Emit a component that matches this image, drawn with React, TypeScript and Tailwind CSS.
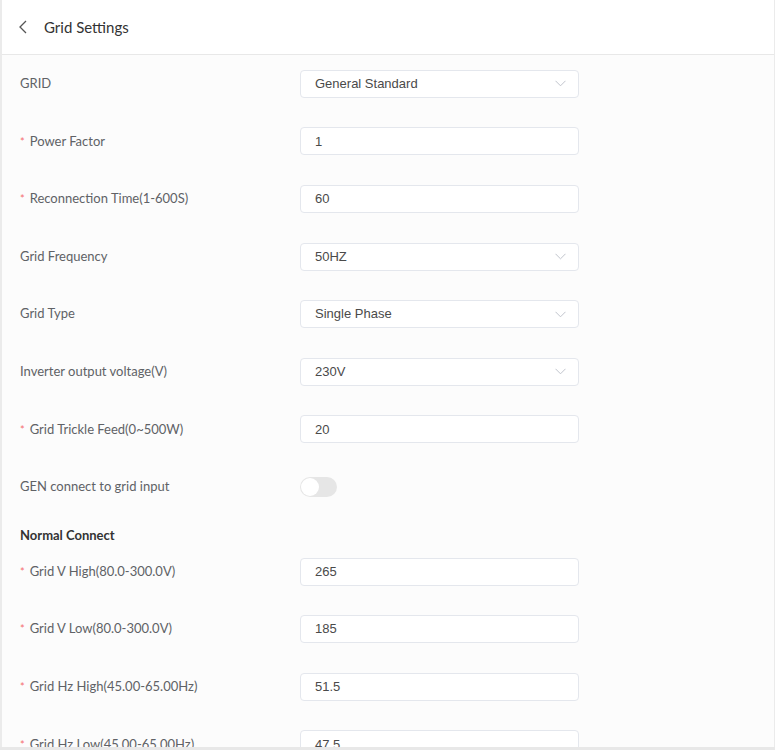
import React from 'react'

type Field = {
  label: string
  required?: boolean
  kind: 'select' | 'input' | 'switch'
  value?: string
}

const mainFields: Field[] = [
  { label: 'GRID', kind: 'select', value: 'General Standard' },
  { label: 'Power Factor', required: true, kind: 'input', value: '1' },
  { label: 'Reconnection Time(1-600S)', required: true, kind: 'input', value: '60' },
  { label: 'Grid Frequency', kind: 'select', value: '50HZ' },
  { label: 'Grid Type', kind: 'select', value: 'Single Phase' },
  { label: 'Inverter output voltage(V)', kind: 'select', value: '230V' },
  { label: 'Grid Trickle Feed(0~500W)', required: true, kind: 'input', value: '20' },
  { label: 'GEN connect to grid input', kind: 'switch' },
]

const normalFields: Field[] = [
  { label: 'Grid V High(80.0-300.0V)', required: true, kind: 'input', value: '265' },
  { label: 'Grid V Low(80.0-300.0V)', required: true, kind: 'input', value: '185' },
  { label: 'Grid Hz High(45.00-65.00Hz)', required: true, kind: 'input', value: '51.5' },
  { label: 'Grid Hz Low(45.00-65.00Hz)', required: true, kind: 'input', value: '47.5' },
]

function Row({ field }: { field: Field }) {
  return (
    <div className="flex h-[57.6px] shrink-0 items-center pl-[18px]">
      <div className="w-[280px] text-[13px] text-[#606266]">
        {field.required && <span className="mr-[5px] text-[11px] text-[#f56c6c]">*</span>}
        {field.label}
      </div>
      {field.kind === 'switch' ? (
        <div className="relative h-[20px] w-[37px] rounded-full bg-[#e6e6e6]">
          <div className="absolute left-[1px] top-[1px] h-[18px] w-[18px] rounded-full bg-white" />
        </div>
      ) : (
        <div className="flex h-[28px] w-[279px] items-center justify-between rounded-[4px] border border-[#e4e7ed] bg-white pl-[14px] pr-[12px] font-['Liberation_Sans',Arial,sans-serif] text-[13px] text-[#4a4a4a]">
          <span>{field.value}</span>
          {field.kind === 'select' && (
            <svg width="11" height="7" viewBox="0 0 11 7" fill="none">
              <polyline points="0.5,0.8 5.5,5.8 10.5,0.8" stroke="#c0c4cc" strokeWidth="1" />
            </svg>
          )}
        </div>
      )}
    </div>
  )
}

export default function App() {
  return (
    <div className="h-[750px] w-[775px] overflow-hidden bg-white font-['Lato',sans-serif]">
      <div className="flex h-[747px] flex-col overflow-hidden border-l-2 border-r border-[#ebebeb] bg-[#fcfcfc]">
        <div className="flex h-[55px] shrink-0 items-center border-b border-[#e8e8e8] bg-white pl-[15px]">
          <svg width="14" height="16" viewBox="0 0 14 16" fill="none">
            <polyline points="9,2 3,8 9,14" stroke="#555" strokeWidth="1.3" />
          </svg>
          <span className="ml-[13px] text-[15px] text-[#333]">Grid Settings</span>
        </div>
        {mainFields.map((f) => (
          <Row key={f.label} field={f} />
        ))}
        <div className="h-[27px] shrink-0 pl-[18px] pt-[9px] text-[13px] font-bold leading-[20px] text-[#333]">
          Normal Connect
        </div>
        {normalFields.map((f) => (
          <Row key={f.label} field={f} />
        ))}
      </div>
      <div className="h-[3px] bg-[#e8e8e8]" />
    </div>
  )
}
